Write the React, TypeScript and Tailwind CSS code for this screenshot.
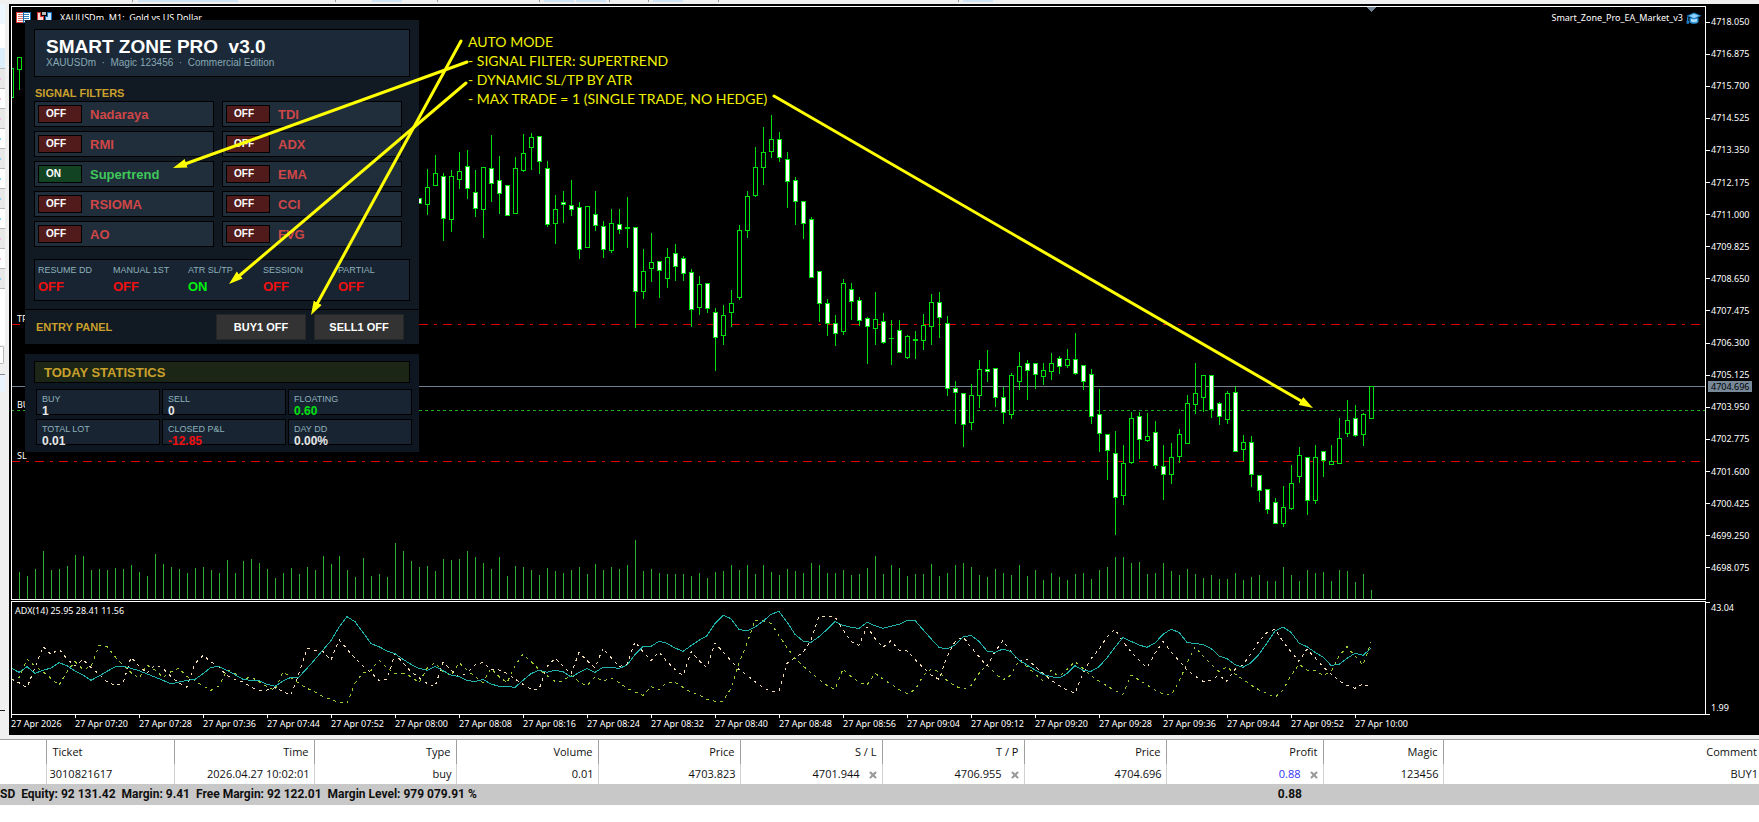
import { X } from "lucide-react";

// ── Chart data (x step is 8px, y values are pixels on the chart canvas) ──

const BAR_STEP = 8;
const FIRST_BAR_X = 11;
const VOLUME_BASE = 599;

type Candle = [high: number, top: number, bottom: number, low: number, bear: 0 | 1];

// oldest bars, left of the panel
const OLD_CANDLES: Candle[] = [
  [68, 68, 98, 98, 0],
  [57, 57, 70, 90, 0],
];

// starts at x = 419
const CANDLES: Candle[] = [
  [198, 198, 204, 204, 1], [169, 187, 205, 215, 0], [155, 173, 186, 186, 0], [173, 176, 219, 241, 1],
  [170, 176, 220, 232, 0], [152, 171, 180, 189, 0], [150, 166, 189, 199, 1], [170, 192, 209, 217, 1],
  [167, 167, 210, 238, 0], [135, 168, 184, 202, 1], [156, 180, 194, 214, 1], [185, 185, 216, 216, 1],
  [157, 168, 214, 214, 0], [134, 153, 171, 172, 0], [133, 137, 148, 170, 0], [136, 136, 162, 174, 1],
  [161, 168, 225, 227, 1], [195, 209, 224, 244, 0], [191, 202, 205, 223, 1], [180, 205, 210, 216, 1],
  [202, 207, 250, 259, 1], [206, 206, 248, 248, 0], [191, 214, 226, 231, 1], [221, 226, 250, 258, 1],
  [209, 223, 251, 253, 0], [209, 224, 230, 234, 1], [197, 227, 229, 248, 1], [227, 227, 292, 328, 1],
  [249, 271, 292, 299, 0], [233, 262, 269, 282, 0], [261, 261, 271, 298, 1], [248, 257, 279, 288, 0],
  [244, 253, 267, 281, 1], [256, 258, 274, 281, 1], [269, 272, 310, 327, 1], [276, 284, 308, 315, 0],
  [283, 283, 309, 313, 1], [308, 312, 338, 371, 1], [305, 315, 336, 345, 0], [290, 303, 313, 327, 0],
  [225, 230, 298, 300, 0], [191, 196, 231, 238, 0], [147, 167, 196, 197, 0], [127, 152, 168, 185, 0],
  [115, 139, 152, 158, 0], [132, 139, 158, 162, 1], [152, 159, 182, 208, 1], [177, 180, 202, 225, 1],
  [201, 201, 224, 239, 1], [217, 219, 278, 278, 1], [271, 271, 304, 322, 1], [299, 303, 324, 336, 1],
  [315, 323, 334, 346, 1], [279, 283, 332, 335, 0], [283, 289, 302, 320, 1], [297, 300, 321, 326, 1],
  [317, 318, 327, 364, 1], [292, 319, 329, 345, 0], [313, 321, 343, 344, 1], [320, 338, 339, 365, 0],
  [320, 330, 353, 353, 1], [335, 336, 358, 359, 0], [331, 339, 341, 359, 1], [314, 325, 341, 350, 0],
  [294, 302, 327, 345, 0], [292, 302, 318, 338, 1], [316, 323, 389, 396, 1], [381, 388, 393, 424, 1],
  [393, 393, 425, 447, 1], [384, 395, 423, 430, 0], [360, 369, 396, 408, 0], [350, 369, 372, 382, 1],
  [368, 368, 398, 407, 1], [387, 397, 413, 424, 1], [373, 375, 415, 419, 0], [352, 366, 382, 390, 0],
  [360, 363, 371, 400, 1], [363, 363, 375, 389, 1], [363, 370, 377, 385, 0], [353, 363, 372, 380, 0],
  [356, 358, 367, 374, 1], [349, 359, 366, 368, 0], [333, 359, 374, 375, 1], [365, 365, 382, 390, 1],
  [369, 374, 417, 424, 1], [389, 414, 434, 452, 1], [434, 434, 451, 480, 1], [431, 453, 498, 535, 1],
  [445, 463, 496, 505, 0], [412, 418, 463, 464, 0], [412, 416, 440, 459, 1], [413, 436, 441, 442, 0],
  [421, 432, 466, 469, 1], [445, 466, 475, 500, 1], [443, 457, 475, 484, 0], [429, 434, 457, 463, 0],
  [395, 403, 444, 444, 0], [363, 393, 405, 414, 0], [375, 375, 398, 412, 0], [375, 375, 410, 418, 1],
  [402, 403, 417, 425, 1], [391, 393, 420, 424, 0], [386, 392, 452, 452, 1], [435, 442, 450, 461, 0],
  [436, 442, 475, 487, 1], [475, 475, 491, 502, 1], [489, 489, 510, 514, 1], [498, 502, 524, 524, 1],
  [486, 507, 524, 527, 0], [465, 483, 509, 510, 0], [447, 455, 477, 483, 0], [457, 457, 501, 515, 1],
  [445, 457, 501, 504, 0], [451, 451, 461, 477, 1], [445, 461, 465, 465, 0], [418, 438, 464, 464, 0],
  [400, 420, 434, 437, 0], [405, 418, 436, 437, 1], [413, 414, 435, 446, 0], [386, 386, 419, 419, 0],
];

// starts at x = 19
const VOLUMES = [
  27, 23, 30, 48, 29, 30, 33, 44, 43, 29, 30, 29, 31, 30, 34, 27, 23, 45, 35, 32, 30, 26, 31, 32, 29, 26, 39, 26,
  38, 40, 36, 30, 21, 26, 31, 25, 32, 29, 43, 35, 43, 29, 22, 41, 23, 25, 22, 56, 48, 38, 32, 33, 28, 40, 39, 40,
  48, 42, 36, 30, 42, 23, 33, 32, 29, 24, 31, 28, 26, 29, 32, 25, 35, 29, 32, 30, 34, 59, 28, 30, 26, 25, 25, 25,
  23, 26, 21, 27, 28, 34, 29, 34, 25, 34, 27, 24, 30, 28, 26, 36, 34, 26, 26, 29, 24, 25, 31, 43, 25, 34, 31, 23,
  25, 25, 35, 23, 26, 34, 36, 32, 24, 22, 30, 26, 24, 34, 23, 29, 19, 26, 22, 19, 25, 26, 20, 29, 32, 42, 42, 36,
  37, 25, 26, 36, 28, 24, 30, 25, 21, 24, 20, 20, 26, 19, 22, 24, 18, 18, 32, 24, 18, 29, 26, 27, 18, 29, 28, 17,
  25, 9,
];

// indicator values are in thirds of a pixel, measured from y = 530
const ADX = [
  414, 427, 410, 430, 421, 414, 398, 407, 423, 435, 451, 438, 424, 411, 409, 415, 422, 432, 441, 451, 462, 456,
  451, 448, 431, 412, 409, 421, 434, 448, 451, 452, 463, 469, 453, 442, 441, 415, 388, 360, 332, 292, 260, 275,
  307, 341, 350, 363, 371, 388, 403, 415, 421, 410, 422, 435, 440, 451, 455, 448, 462, 469, 469, 472, 451, 431,
  421, 427, 421, 425, 441, 428, 415, 427, 412, 412, 415, 406, 374, 349, 349, 334, 340, 354, 364, 347, 331, 317,
  281, 256, 266, 298, 303, 291, 274, 253, 244, 276, 313, 333, 337, 320, 299, 274, 286, 292, 295, 277, 287, 295,
  289, 283, 271, 271, 299, 326, 352, 357, 345, 321, 316, 334, 363, 367, 357, 365, 390, 405, 420, 433, 440, 444,
  431, 407, 421, 424, 410, 384, 352, 322, 334, 345, 352, 339, 313, 298, 307, 337, 341, 343, 355, 378, 386, 404,
  412, 398, 373, 339, 303, 291, 307, 339, 350, 367, 381, 406, 403, 385, 370, 376, 355,
];

const MINUS_DI = [
  447, 458, 473, 412, 350, 373, 357, 387, 408, 388, 412, 433, 455, 466, 460, 382, 408, 430, 405, 415, 440, 459,
  472, 400, 376, 395, 411, 437, 448, 456, 471, 482, 480, 473, 485, 495, 430, 355, 361, 365, 390, 329, 357, 385,
  408, 428, 452, 448, 372, 398, 425, 443, 460, 470, 397, 420, 440, 430, 405, 397, 418, 420, 430, 447, 463, 478,
  478, 410, 385, 408, 433, 367, 392, 413, 355, 383, 410, 403, 335, 365, 392, 366, 395, 418, 437, 365, 392, 413,
  339, 365, 392, 418, 436, 455, 472, 484, 482, 400, 382, 368, 330, 259, 259, 261, 299, 335, 346, 290, 325, 352,
  332, 360, 363, 388, 412, 435, 448, 380, 335, 320, 352, 380, 408, 365, 332, 365, 392, 388, 408, 430, 450, 466,
  480, 490, 430, 386, 358, 320, 298, 335, 365, 390, 413, 370, 335, 365, 392, 420, 438, 454, 450, 436, 454, 418,
  405, 370, 333, 308, 298, 335, 365, 394, 357, 383, 410, 432, 452, 466, 475, 462, 472,
];

const PLUS_DI = [
  450, 443, 388, 408, 425, 445, 466, 425, 395, 418, 410, 346, 350, 380, 405, 428, 445, 405, 420, 442, 425, 415,
  440, 452, 468, 481, 468, 420, 430, 448, 441, 455, 470, 482, 425, 443, 460, 475, 486, 500, 508, 518, 520, 460,
  428, 422, 390, 415, 430, 430, 440, 458, 415, 398, 425, 437, 398, 420, 440, 458, 415, 440, 458, 408, 372, 395,
  418, 437, 454, 453, 435, 455, 468, 440, 453, 444, 458, 475, 486, 496, 470, 480, 457, 457, 472, 486, 495, 508,
  514, 513, 475, 400, 340, 270, 273, 280, 317, 352, 385, 408, 428, 448, 466, 478, 417, 440, 457, 465, 430, 447,
  463, 478, 490, 480, 438, 417, 425, 452, 468, 478, 467, 430, 405, 430, 450, 435, 390, 410, 432, 452, 421, 440,
  418, 395, 415, 437, 453, 468, 482, 493, 435, 450, 465, 480, 492, 496, 455, 400, 350, 378, 402, 424, 410, 432,
  448, 465, 480, 490, 502, 480, 437, 402, 420, 422, 436, 425, 378, 350, 378, 405, 337,
];

const PRICES = [
  "4718.050", "4716.875", "4715.700", "4714.525", "4713.350", "4712.175", "4711.000", "4709.825", "4708.650",
  "4707.475", "4706.300", "4705.125", "4703.950", "4702.775", "4701.600", "4700.425", "4699.250", "4698.075",
];

const TIMES = [
  "27 Apr 2026", "27 Apr 07:20", "27 Apr 07:28", "27 Apr 07:36", "27 Apr 07:44", "27 Apr 07:52", "27 Apr 08:00",
  "27 Apr 08:08", "27 Apr 08:16", "27 Apr 08:24", "27 Apr 08:32", "27 Apr 08:40", "27 Apr 08:48", "27 Apr 08:56",
  "27 Apr 09:04", "27 Apr 09:12", "27 Apr 09:20", "27 Apr 09:28", "27 Apr 09:36", "27 Apr 09:44", "27 Apr 09:52",
  "27 Apr 10:00",
];

// ── Panel data ──

const FILTERS = [
  { name: "Nadaraya", on: false },
  { name: "TDI", on: false },
  { name: "RMI", on: false },
  { name: "ADX", on: false },
  { name: "Supertrend", on: true },
  { name: "EMA", on: false },
  { name: "RSIOMA", on: false },
  { name: "CCI", on: false },
  { name: "AO", on: false },
  { name: "FVG", on: false },
];

const MODES = [
  { name: "RESUME DD", on: false },
  { name: "MANUAL 1ST", on: false },
  { name: "ATR SL/TP", on: true },
  { name: "SESSION", on: false },
  { name: "PARTIAL", on: false },
];

const STATS = [
  { name: "BUY", value: "1", color: "text-[#e6e6e6]" },
  { name: "SELL", value: "0", color: "text-[#e6e6e6]" },
  { name: "FLOATING", value: "0.60", color: "text-[#00e010]" },
  { name: "TOTAL LOT", value: "0.01", color: "text-[#e6e6e6]" },
  { name: "CLOSED P&L", value: "-12.85", color: "text-[#f01010]" },
  { name: "DAY DD", value: "0.00%", color: "text-[#e6e6e6]" },
];

const NOTES = [
  "AUTO MODE",
  "- SIGNAL FILTER: SUPERTREND",
  "- DYNAMIC SL/TP BY ATR",
  "- MAX TRADE = 1 (SINGLE TRADE, NO HEDGE)",
];

const toPoints = (values: number[]) =>
  values.map((v, i) => `${FIRST_BAR_X + i * BAR_STEP},${530 + v / 3}`).join(" ");

function CandleBar({ x, candle }: { x: number; candle: Candle }) {
  const [high, top, bottom, low, bear] = candle;
  const height = bottom - top;
  return (
    <g>
      <rect x={x} y={high} width={1} height={low - high} fill="#00e010" />
      <rect x={x - 2} y={top} width={5} height={height} fill="#00e010" />
      {height > 2 && (
        <rect x={x - 1} y={top + 1} width={3} height={height - 2} fill={bear ? "#ffffff" : "#000000"} />
      )}
    </g>
  );
}

function PriceCanvas() {
  return (
    <svg className="absolute inset-0 h-full w-full" shapeRendering="crispEdges" aria-hidden="true">
      <g transform="translate(-12 -7)">
        <path d="M11 324.5H1701M11 461.5H1701" stroke="#e00000" strokeDasharray="9 6 3 6" />
        <path d="M11 386.5H4000" stroke="#708090" />
        <path d="M11 410.5H4000" stroke="#22a822" strokeDasharray="3 3" />
        {VOLUMES.map((v, i) => (
          <rect key={i} x={19 + i * BAR_STEP} y={VOLUME_BASE - v} width={1} height={v} fill="#30b030" />
        ))}
        {OLD_CANDLES.map((c, i) => (
          <CandleBar key={i} x={FIRST_BAR_X + i * BAR_STEP} candle={c} />
        ))}
        {CANDLES.map((c, i) => (
          <CandleBar key={i} x={419 + i * BAR_STEP} candle={c} />
        ))}
        <path d="M1366 7h10l-5 5z" fill="#708090" />
        <g fill="#ffffff" fontSize={9} fontFamily="Noto Sans, sans-serif">
          <text x={17} y={322}>TP</text>
          <text x={17} y={408}>BUY</text>
          <text x={17} y={459}>SL</text>
        </g>
      </g>
    </svg>
  );
}

function Arrows() {
  return (
    <svg className="pointer-events-none absolute inset-0 h-full w-full" aria-hidden="true">
      <defs>
        <marker
          id="head"
          markerUnits="userSpaceOnUse"
          markerWidth={15}
          markerHeight={10}
          refX={14}
          refY={5}
          orient="auto"
        >
          <path d="M0 0.5L14 5L0 9.5z" fill="#ffff00" />
        </marker>
      </defs>
      <g transform="translate(-12 -7)" stroke="#ffff00" strokeWidth={3} strokeLinecap="round">
        <line x1={467} y1={62} x2={185} y2={164} />
        <line x1={466} y1={83} x2={239} y2={276} />
        <line x1={461} y1={41} x2={317} y2={304} />
        <line x1={774} y1={96} x2={1303} y2={402} />
        <g stroke="none" fill="none">
          <line x1={467} y1={62} x2={173} y2={168} markerEnd="url(#head)" />
          <line x1={466} y1={83} x2={229} y2={284} markerEnd="url(#head)" />
          <line x1={461} y1={41} x2={311} y2={315} markerEnd="url(#head)" />
          <line x1={774} y1={96} x2={1313} y2={408} markerEnd="url(#head)" />
        </g>
      </g>
    </svg>
  );
}

function SymbolIcons() {
  return (
    <svg width={38} height={12} shapeRendering="crispEdges" aria-hidden="true">
      {/* depth of market */}
      <path d="M0 0h8v11H0z" fill="#d9362f" />
      <path d="M1 1h6v9H1z" fill="#fff" />
      <path d="M2 2h5v1H2zM2 4h5v1H2zM2 6h5v1H2zM2 8h5v1H2z" fill="#e0746e" />
      <path d="M7 0h8v11H7z" fill="#1769aa" />
      <path d="M8 1h6v9H8z" fill="#fff" />
      <path d="M8 2h5v1H8zM8 4h5v1H8zM8 6h5v1H8zM8 8h5v1H8z" fill="#2f83bf" />
      {/* one click trading */}
      <path d="M21 0h4v4h3v7h-7z" fill="#d9362f" />
      <path d="M22 1h2v4h3v5h-5z" fill="#ffd6d2" />
      <path d="M36 0h-5v4h-2v7h7z" fill="#1769aa" />
      <path d="M35 1h-3v4h-2v5h5z" fill="#bfe2ff" />
      <path d="M26 0h4v3h-4z" fill="#b8b8b8" />
    </svg>
  );
}

function ExpertIcon() {
  return (
    <svg width={16} height={13} viewBox="0 0 16 13" aria-hidden="true">
      <path d="M3.5 6v4.2c2 2 7 2 9 0V6z" fill="#2f8fd0" />
      <path d="M5 9.6c1.8 1 4.2 1 6 0V7H5z" fill="#a8dcff" />
      <path d="M8 0.5L15.5 3.8L8 7.6L0.5 3.8z" fill="#1c7ec4" />
      <path d="M8 1.7L13 3.8L8 6.3L3.2 3.8z" fill="#8fd2ff" />
      <path d="M1 4.5h1.4V9H3v2.8H0.5V9H1z" fill="#1c7ec4" />
    </svg>
  );
}

function ControlPanel() {
  return (
    <div className="absolute top-[13px] left-[13px] w-[394px] font-['Liberation_Sans',sans-serif]">
      <section className="bg-[#111923] pt-[9px]">
        <div className="px-[9px]">
          <header className="h-12 border border-black bg-[#1c2938] pt-[7px] pl-[11px]">
            <h1 className="text-[19px] leading-5 font-bold whitespace-pre text-white">
              {"SMART ZONE PRO  v3.0"}
            </h1>
            <p className="text-[10px] leading-3 whitespace-pre text-[#86a8b4]">
              {"XAUUSDm  ·  Magic 123456  ·  Commercial Edition"}
            </p>
          </header>

          <h2 className="mt-2 pl-px text-[11px] leading-4 font-bold text-[#c9a02c]">SIGNAL FILTERS</h2>
          <div className="mr-2 grid grid-cols-2 gap-x-2 gap-y-1">
            {FILTERS.map((f) => (
              <div key={f.name} className="flex h-[26px] items-center gap-2 border border-black bg-[#202e3c] px-[3px]">
                <button
                  aria-label={`${f.name} filter`}
                  aria-pressed={f.on}
                  className={`h-[18px] w-11 border border-black pl-[7px] text-left text-[10px] leading-4 font-bold text-white ${
                    f.on ? "bg-[#124322]" : "bg-[#521b1b]"
                  }`}
                >
                  {f.on ? "ON" : "OFF"}
                </button>
                <span className={`pt-px text-[13px] leading-4 font-bold ${f.on ? "text-[#3fc95a]" : "text-[#cf4646]"}`}>
                  {f.name}
                </span>
              </div>
            ))}
          </div>

          <dl className="mt-3 flex h-[42px] border border-black bg-[#182432] pt-1 pl-[3px]">
            {MODES.map((m) => (
              <div key={m.name} className="w-[75px] shrink-0">
                <dt className="text-[9px] leading-3 whitespace-nowrap text-[#8db0ba]">{m.name}</dt>
                <dd className={`text-[13px] leading-[22px] font-bold ${m.on ? "text-[#00f010]" : "text-[#f01010]"}`}>
                  {m.on ? "ON" : "OFF"}
                </dd>
              </div>
            ))}
          </dl>
        </div>

        <div className="mt-2 flex items-center gap-2 border-t border-black py-1 pr-[15px] pl-[11px]">
          <h2 className="flex-1 text-[11px] leading-4 font-bold text-[#c9a02c]">ENTRY PANEL</h2>
          <button className="h-[26px] w-[90px] border border-[#262626] bg-[#333333] text-[11px] font-bold text-white">
            BUY1 OFF
          </button>
          <button className="h-[26px] w-[90px] border border-[#262626] bg-[#333333] text-[11px] font-bold text-white">
            SELL1 OFF
          </button>
        </div>
      </section>

      <section className="mt-[10px] bg-[#0d1621] px-[9px] py-[7px]">
        <h2 className="h-[22px] border border-black bg-[#1c2616] pl-[9px] text-[13px] leading-[22px] font-bold text-[#c9a02c]">
          TODAY STATISTICS
        </h2>
        <dl className="mt-[6px] ml-[2px] grid grid-cols-[124px_124px_124px] gap-x-[2px] gap-y-1">
          {STATS.map((s) => (
            <div key={s.name} className="h-[26px] border border-black bg-[#182432] pt-[3px] pl-[5px]">
              <dt className="text-[9px] leading-3 text-[#8db0ba]">{s.name}</dt>
              <dd className={`text-xs leading-3 font-bold ${s.color}`}>{s.value}</dd>
            </div>
          ))}
        </dl>
      </section>
    </div>
  );
}

function PriceAxis() {
  return (
    <div className="relative w-[53px] shrink-0 pt-[9px]">
      <ul className="flex h-[560px] flex-col justify-between">
        {PRICES.map((p) => (
          <li key={p} className="flex h-[14px] items-center gap-px">
            <span className="h-px w-1 bg-white" />
            {p}
          </li>
        ))}
      </ul>
      {/* current bid */}
      <span className="absolute top-[375px] left-[2px] h-[11px] w-11 bg-[#778899] pl-[3px] leading-[11px] text-black">
        4704.696
      </span>
    </div>
  );
}

function Chart() {
  return (
    <main className="min-w-0 flex-1 overflow-hidden bg-black pt-[2px] pl-[2px] font-['Noto_Sans',sans-serif] text-[9px] leading-[14px] text-white">
      <div className="flex">
        <div className="relative h-[594px] flex-1 overflow-hidden border border-white">
          <PriceCanvas />
          <div className="flex h-[22px] items-center pr-[3px] pl-1">
            <div className="relative flex flex-1 items-center gap-[6px]">
              <SymbolIcons />
              <span className="whitespace-pre">{"XAUUSDm, M1:  Gold vs US Dollar"}</span>
            </div>
            <span className="mr-[3px]">Smart_Zone_Pro_EA_Market_v3</span>
            <ExpertIcon />
          </div>
          <ControlPanel />
          <div className="absolute top-[25px] left-[456px] font-[Lato,sans-serif] text-sm leading-[19px] text-[#f0f000]">
            {NOTES.map((n) => (
              <p key={n} className="whitespace-nowrap">
                {n}
              </p>
            ))}
          </div>
          <Arrows />
        </div>
        <PriceAxis />
      </div>

      <div className="mt-px flex">
        <div className="relative h-[114px] flex-1 overflow-hidden border border-white">
          <svg className="absolute inset-0 h-full w-full" shapeRendering="crispEdges" aria-hidden="true">
            <g transform="translate(-12 -602)" fill="none">
              <polyline points={toPoints(PLUS_DI)} stroke="#9acd32" strokeDasharray="3 4" />
              <polyline points={toPoints(MINUS_DI)} stroke="#f5deb3" strokeDasharray="3 4" />
              <polyline points={toPoints(ADX)} stroke="#20b2aa" />
            </g>
          </svg>
          <p className="relative px-[3px] pt-[2px]">ADX(14) 25.95 28.41 11.56</p>
        </div>
        <div className="flex w-[53px] shrink-0 flex-col justify-between">
          <div className="flex items-start gap-px">
            <span className="mt-px h-px w-1 bg-white" />
            43.04
          </div>
          <div className="flex items-end gap-px">
            <span className="h-px w-1 bg-white" />
            1.99
          </div>
        </div>
      </div>

      <ul className="flex h-5">
        {TIMES.map((t) => (
          <li key={t} className="w-16 shrink-0 whitespace-nowrap">
            <span className="block h-[3px] w-px bg-white" />
            <span className="block leading-3">{t}</span>
          </li>
        ))}
      </ul>
    </main>
  );
}

// bottom edge of the terminal's toolbars
const TOOLBAR_PARTS = [
  "ml-[132px] w-px bg-[#9a9a9a]",
  "ml-[5px] w-[100px] bg-[#cfe3f5]",
  "ml-[97px] w-px bg-[#9a9a9a]",
  "ml-[36px] w-[30px] bg-[#cfe3f5]",
  "ml-[35px] w-px bg-[#9a9a9a]",
  "ml-[101px] w-px bg-[#9a9a9a]",
  "ml-[4px] w-[30px] bg-[#cfe3f5]",
  "ml-[2px] w-[30px] bg-[#cfe3f5]",
  "ml-[3px] w-px bg-[#9a9a9a]",
  "ml-[38px] w-px bg-[#9a9a9a]",
  "ml-[4px] w-[30px] bg-[#cfe3f5]",
  "ml-[35px] w-px bg-[#9a9a9a]",
  "ml-[239px] w-px bg-[#9a9a9a]",
  "ml-[4px] w-[30px] bg-[#cfe3f5]",
];

// right edge of the docked market watch
const DOCK_ROWS = [
  { fill: "bg-[#e8e8e8]", mark: "bg-[#f5b5e5]" },
  { fill: "bg-white", mark: "bg-[#f5b5e5]" },
  { fill: "bg-[#e8e8e8]", mark: "bg-[#f5b5e5]" },
  { fill: "bg-white", mark: "bg-[#7fd0f5]" },
  { fill: "bg-[#e8e8e8]", mark: "bg-[#7fd0f5]" },
  { fill: "bg-white", mark: "bg-[#7fd0f5]" },
  { fill: "bg-[#e8e8e8]", mark: "bg-[#7fd0f5]" },
  { fill: "bg-white", mark: "bg-[#7fd0f5]" },
  { fill: "bg-[#e8e8e8]", mark: "bg-[#f5b5e5]" },
  { fill: "bg-white", mark: "bg-[#f5b5e5]" },
  { fill: "bg-[#e8e8e8]", mark: "bg-[#7fd0f5]" },
];

function Dock() {
  return (
    <aside className="w-[9px] shrink-0 bg-[#f0f0f0]">
      <div className="w-[5px]">
        <div className="h-5 bg-[#eef6ff]" />
        <div className="h-6 bg-white" />
        <div className="h-5 bg-[#dceefb]" />
        {DOCK_ROWS.map((row, i) => (
          <div key={i} className={`flex h-5 items-center border-t border-[#b8b8b8] ${row.fill}`}>
            <span className={`h-[2px] w-px ${row.mark}`} />
          </div>
        ))}
        <div className="h-[57px] border-t border-[#b8b8b8] bg-white" />
        <div className="mt-px h-[18px] w-1 rounded-r-xs border border-l-0 border-[#b8b8b8] bg-white" />
        <div className="mt-[10px] h-[18px] border-t border-[#8a8a8a] bg-[#eaf4ff]" />
        <div className="mt-[318px] h-px bg-[#202020]" />
      </div>
    </aside>
  );
}

const COLUMNS = ["Time", "Type", "Volume", "Price", "S / L", "T / P", "Price", "Profit", "Magic"];

function CloseButton({ label }: { label: string }) {
  return (
    <button aria-label={label} className="ml-2 align-middle">
      <X className="h-[10px] w-[10px] text-[#9a9a9a]" strokeWidth={5} />
    </button>
  );
}

function TradeTable() {
  return (
    <table className="w-full table-fixed border-t border-[#a0a0a0] bg-white text-right font-['Open_Sans',sans-serif] text-[11px] leading-4 whitespace-nowrap text-[#101010]">
      <colgroup>
        <col className="w-[46px]" />
        <col className="w-32" />
        <col className="w-[140px]" />
        <col className="w-[142px]" />
        <col className="w-[142px]" />
        <col className="w-[142px]" />
        <col className="w-[142px]" />
        <col className="w-[142px]" />
        <col className="w-[142px]" />
        <col className="w-[157px]" />
        <col className="w-[120px]" />
        <col />
      </colgroup>
      <thead>
        <tr className="h-6">
          <td className="border-r border-[#a0a0a0]" />
          <th scope="col" className="border-r border-[#a0a0a0] pl-[6px] text-left font-normal">
            Ticket
          </th>
          {COLUMNS.map((c, i) => (
            <th key={i} scope="col" className="border-r border-[#a0a0a0] pr-[5px] font-normal">
              {c}
            </th>
          ))}
          <th scope="col" className="pr-[2px] font-normal">
            Comment
          </th>
        </tr>
      </thead>
      <tbody>
        <tr className="h-5">
          <td className="border-r border-[#d0d0d0]" />
          <td className="border-r border-[#d0d0d0] pl-[3px] text-left">3010821617</td>
          <td className="border-r border-[#d0d0d0] pr-1">2026.04.27 10:02:01</td>
          <td className="border-r border-[#d0d0d0] pr-1">buy</td>
          <td className="border-r border-[#d0d0d0] pr-1">0.01</td>
          <td className="border-r border-[#d0d0d0] pr-1">4703.823</td>
          <td className="border-r border-[#d0d0d0] pr-1">
            4701.944
            <CloseButton label="Remove stop loss" />
          </td>
          <td className="border-r border-[#d0d0d0] pr-1">
            4706.955
            <CloseButton label="Remove take profit" />
          </td>
          <td className="border-r border-[#d0d0d0] pr-1">4704.696</td>
          <td className="border-r border-[#d0d0d0] pr-1 text-[#3030f0]">
            0.88
            <CloseButton label="Close position" />
          </td>
          <td className="border-r border-[#d0d0d0] pr-1">123456</td>
          <td className="pr-px">BUY1</td>
        </tr>
      </tbody>
      <tfoot>
        <tr className="h-[21px] bg-[#c8c8c8] font-[Roboto,sans-serif] text-xs font-bold">
          <td colSpan={9} className="text-left whitespace-pre">
            {"SD  Equity: 92 131.42  Margin: 9.41  Free Margin: 92 122.01  Margin Level: 979 079.91 %"}
          </td>
          <td className="pr-[21px]">0.88</td>
          <td colSpan={2} />
        </tr>
      </tfoot>
    </table>
  );
}

export default function App() {
  return (
    <div className="flex min-h-screen flex-col overflow-x-hidden bg-white">
      <div className="flex h-1 bg-[#f0f0f0] pb-[2px]">
        {TOOLBAR_PARTS.map((part, i) => (
          <span key={i} className={`shrink-0 ${part}`} />
        ))}
      </div>
      <div className="flex">
        <Dock />
        <Chart />
      </div>
      <div className="h-1 bg-[#f0f0f0]" />
      <TradeTable />
    </div>
  );
}
